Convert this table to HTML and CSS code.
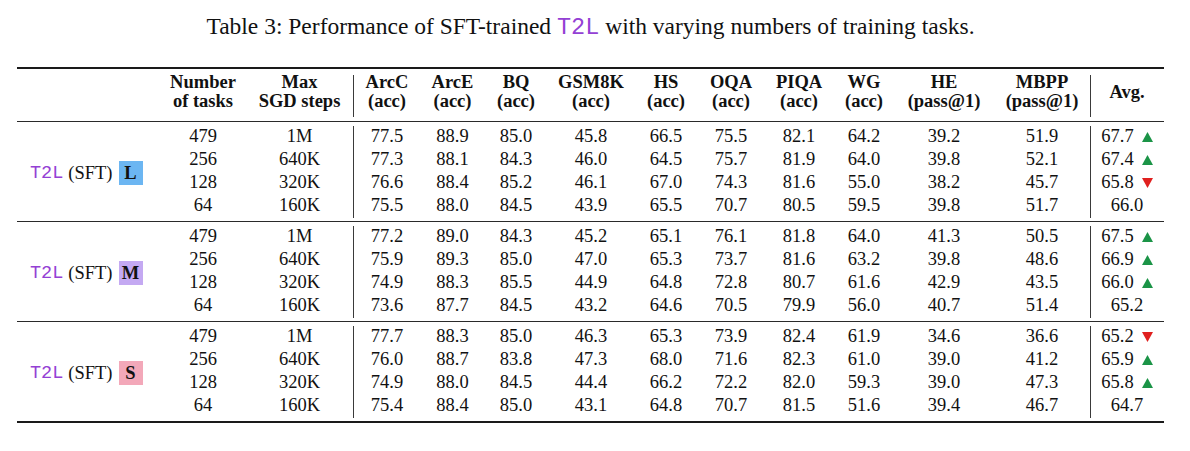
FILE: index.html
```html
<!DOCTYPE html>
<html>
<head>
<meta charset="utf-8">
<link rel="stylesheet" href="styles.css">
</head>
<body>
<div class="page">
  <p class="caption">Table 3: Performance of SFT-trained <span class="mono">T2L</span> with varying numbers of training tasks.</p>
  <table class="results">
    <colgroup>
      <col class="c-label"><col class="c-num"><col class="c-max">
      <col class="c-arcc"><col class="c-arce"><col class="c-bq"><col class="c-gsm">
      <col class="c-hs"><col class="c-oqa"><col class="c-piqa"><col class="c-wg">
      <col class="c-he"><col class="c-mbpp"><col class="c-avg">
    </colgroup>
    <thead>
      <tr>
        <th></th>
        <th>Number<br>of tasks</th>
        <th>Max<br>SGD steps</th>
        <th class="vl">ArcC<br>(acc)</th>
        <th>ArcE<br>(acc)</th>
        <th>BQ<br>(acc)</th>
        <th>GSM8K<br>(acc)</th>
        <th>HS<br>(acc)</th>
        <th>OQA<br>(acc)</th>
        <th>PIQA<br>(acc)</th>
        <th>WG<br>(acc)</th>
        <th>HE<br>(pass@1)</th>
        <th>MBPP<br>(pass@1)</th>
        <th class="vl">Avg.</th>
      </tr>
    </thead>
    <tbody>
      <tr class="first">
        <td class="label" rowspan="4"><span class="lab"><span class="mono">T2L</span><span>(SFT)</span><span class="tag tag-l">L</span></span></td>
        <td>479</td><td>1M</td><td class="vl">77.5</td><td>88.9</td><td>85.0</td><td>45.8</td><td>66.5</td><td>75.5</td><td>82.1</td><td>64.2</td><td>39.2</td><td>51.9</td>
        <td class="vl">67.7<svg class="tri" viewBox="0 0 11 10" width="11" height="10"><polygon points="5.5,0 11,10 0,10" fill="#1b9447"/></svg></td>
      </tr>
      <tr>
        <td>256</td><td>640K</td><td class="vl">77.3</td><td>88.1</td><td>84.3</td><td>46.0</td><td>64.5</td><td>75.7</td><td>81.9</td><td>64.0</td><td>39.8</td><td>52.1</td>
        <td class="vl">67.4<svg class="tri" viewBox="0 0 11 10" width="11" height="10"><polygon points="5.5,0 11,10 0,10" fill="#1b9447"/></svg></td>
      </tr>
      <tr>
        <td>128</td><td>320K</td><td class="vl">76.6</td><td>88.4</td><td>85.2</td><td>46.1</td><td>67.0</td><td>74.3</td><td>81.6</td><td>55.0</td><td>38.2</td><td>45.7</td>
        <td class="vl">65.8<svg class="tri" viewBox="0 0 11 10" width="11" height="10"><polygon points="0,0 11,0 5.5,10" fill="#e0201f"/></svg></td>
      </tr>
      <tr class="last">
        <td>64</td><td>160K</td><td class="vl">75.5</td><td>88.0</td><td>84.5</td><td>43.9</td><td>65.5</td><td>70.7</td><td>80.5</td><td>59.5</td><td>39.8</td><td>51.7</td>
        <td class="vl">66.0</td>
      </tr>
    </tbody>
    <tbody>
      <tr class="first">
        <td class="label" rowspan="4"><span class="lab"><span class="mono">T2L</span><span>(SFT)</span><span class="tag tag-m">M</span></span></td>
        <td>479</td><td>1M</td><td class="vl">77.2</td><td>89.0</td><td>84.3</td><td>45.2</td><td>65.1</td><td>76.1</td><td>81.8</td><td>64.0</td><td>41.3</td><td>50.5</td>
        <td class="vl">67.5<svg class="tri" viewBox="0 0 11 10" width="11" height="10"><polygon points="5.5,0 11,10 0,10" fill="#1b9447"/></svg></td>
      </tr>
      <tr>
        <td>256</td><td>640K</td><td class="vl">75.9</td><td>89.3</td><td>85.0</td><td>47.0</td><td>65.3</td><td>73.7</td><td>81.6</td><td>63.2</td><td>39.8</td><td>48.6</td>
        <td class="vl">66.9<svg class="tri" viewBox="0 0 11 10" width="11" height="10"><polygon points="5.5,0 11,10 0,10" fill="#1b9447"/></svg></td>
      </tr>
      <tr>
        <td>128</td><td>320K</td><td class="vl">74.9</td><td>88.3</td><td>85.5</td><td>44.9</td><td>64.8</td><td>72.8</td><td>80.7</td><td>61.6</td><td>42.9</td><td>43.5</td>
        <td class="vl">66.0<svg class="tri" viewBox="0 0 11 10" width="11" height="10"><polygon points="5.5,0 11,10 0,10" fill="#1b9447"/></svg></td>
      </tr>
      <tr class="last">
        <td>64</td><td>160K</td><td class="vl">73.6</td><td>87.7</td><td>84.5</td><td>43.2</td><td>64.6</td><td>70.5</td><td>79.9</td><td>56.0</td><td>40.7</td><td>51.4</td>
        <td class="vl">65.2</td>
      </tr>
    </tbody>
    <tbody>
      <tr class="first">
        <td class="label" rowspan="4"><span class="lab"><span class="mono">T2L</span><span>(SFT)</span><span class="tag tag-s">S</span></span></td>
        <td>479</td><td>1M</td><td class="vl">77.7</td><td>88.3</td><td>85.0</td><td>46.3</td><td>65.3</td><td>73.9</td><td>82.4</td><td>61.9</td><td>34.6</td><td>36.6</td>
        <td class="vl">65.2<svg class="tri" viewBox="0 0 11 10" width="11" height="10"><polygon points="0,0 11,0 5.5,10" fill="#e0201f"/></svg></td>
      </tr>
      <tr>
        <td>256</td><td>640K</td><td class="vl">76.0</td><td>88.7</td><td>83.8</td><td>47.3</td><td>68.0</td><td>71.6</td><td>82.3</td><td>61.0</td><td>39.0</td><td>41.2</td>
        <td class="vl">65.9<svg class="tri" viewBox="0 0 11 10" width="11" height="10"><polygon points="5.5,0 11,10 0,10" fill="#1b9447"/></svg></td>
      </tr>
      <tr>
        <td>128</td><td>320K</td><td class="vl">74.9</td><td>88.0</td><td>84.5</td><td>44.4</td><td>66.2</td><td>72.2</td><td>82.0</td><td>59.3</td><td>39.0</td><td>47.3</td>
        <td class="vl">65.8<svg class="tri" viewBox="0 0 11 10" width="11" height="10"><polygon points="5.5,0 11,10 0,10" fill="#1b9447"/></svg></td>
      </tr>
      <tr class="last">
        <td>64</td><td>160K</td><td class="vl">75.4</td><td>88.4</td><td>85.0</td><td>43.1</td><td>64.8</td><td>70.7</td><td>81.5</td><td>51.6</td><td>39.4</td><td>46.7</td>
        <td class="vl">64.7</td>
      </tr>
    </tbody>
  </table>
</div>
</body>
</html>
```

FILE: styles.css
```css
html, body {
  margin: 0;
  padding: 0;
  background: #ffffff;
}

body {
  font-family: "Liberation Serif", "Times New Roman", serif;
  color: #111111;
}

.page {
  width: 1190px;
  padding: 13px 0 0 17px;
  box-sizing: border-box;
}

.caption {
  margin: 0 0 26px 0;
  width: 1147px;
  text-align: center;
  font-size: 23.5px;
  line-height: 27px;
}

.mono {
  font-family: "Liberation Mono", "Courier New", monospace;
  color: #9440d4;
}

.results {
  width: 1147px;
  table-layout: fixed;
  border-collapse: separate;
  border-spacing: 0;
  font-size: 18.5px;
}

.c-label { width: 143px; }
.c-num { width: 86px; }
.c-max { width: 107px; }
.c-arcc { width: 68px; }
.c-arce { width: 63px; }
.c-bq { width: 64px; }
.c-gsm { width: 86px; }
.c-hs { width: 64px; }
.c-oqa { width: 66px; }
.c-piqa { width: 70px; }
.c-wg { width: 60px; }
.c-he { width: 100px; }
.c-mbpp { width: 96px; }
.c-avg { width: 74px; }

.results th,
.results td {
  padding: 0;
  text-align: center;
  white-space: nowrap;
  vertical-align: middle;
}

.results th {
  font-weight: bold;
  line-height: 19px;
  padding: 4px 0 10px 0;
  border-top: 2px solid #1a1a1a;
  border-bottom: 1px solid #2a2a2a;
}

.results td {
  line-height: 23px;
}

.results tr.first td {
  padding-top: 3px;
}

.results tr.last td {
  padding-bottom: 4px;
  border-bottom: 1px solid #2a2a2a;
}

.results td.label {
  border-bottom: 1px solid #2a2a2a;
  text-align: left;
  padding: 0 0 0 13px;
}

.results tbody:last-child tr.last td,
.results tbody:last-child td.label {
  border-bottom: 2px solid #1a1a1a;
}

.vl {
  background-image: linear-gradient(#3a3a3a, #3a3a3a);
  background-repeat: no-repeat;
  background-origin: padding-box;
  background-clip: padding-box;
  background-position: left top;
  background-size: 1px 100%;
}

.results th.vl {
  background-position: left 6px;
  background-size: 1px calc(100% - 10px);
}

.results tr.first td.vl {
  background-position: left 4px;
  background-size: 1px calc(100% - 4px);
}

.results tr.last td.vl {
  background-position: left top;
  background-size: 1px calc(100% - 3px);
}

.lab {
  display: inline-flex;
  align-items: center;
  gap: 5px;
}

.tag {
  display: inline-flex;
  align-items: center;
  justify-content: center;
  width: 24px;
  height: 24px;
  margin-left: 1px;
  font-weight: bold;
  color: #111111;
}

.tag-l { background: #6cb6f2; }
.tag-m { background: #c4a9f2; }
.tag-s { background: #f3a8b9; }

.tri {
  display: inline-block;
  margin-left: 8px;
  vertical-align: 0px;
}
```
